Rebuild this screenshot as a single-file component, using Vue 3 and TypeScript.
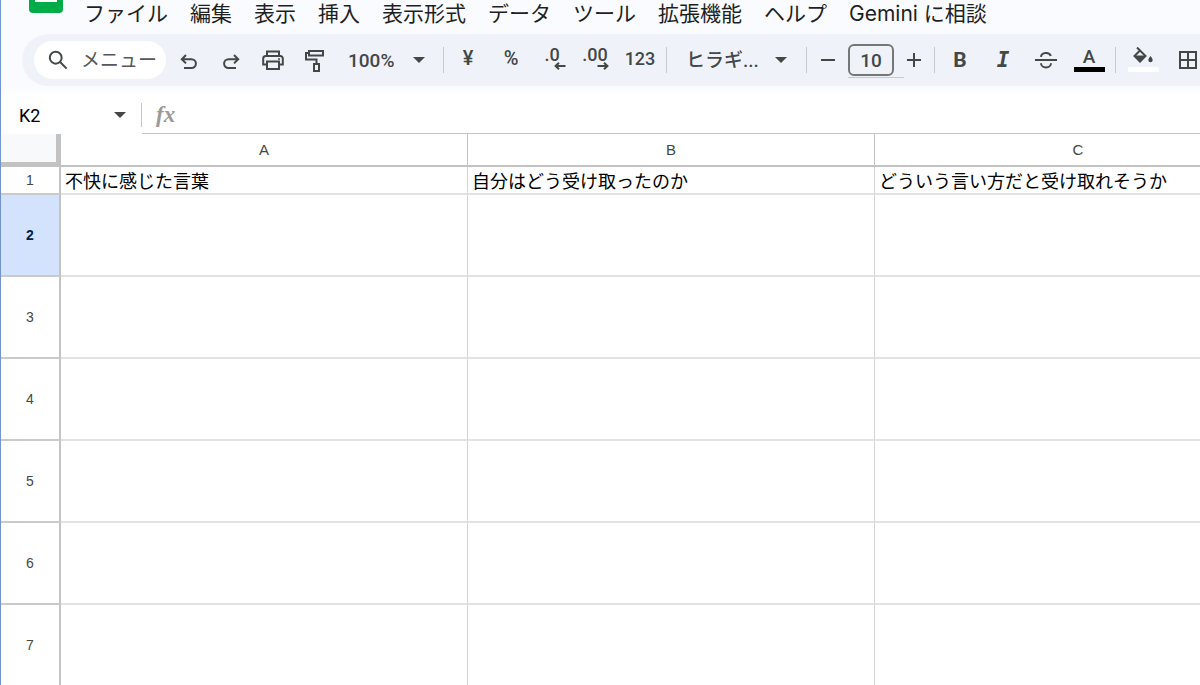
<script setup lang="ts">
import { ref } from 'vue'

const menus = ['ファイル', '編集', '表示', '挿入', '表示形式', 'データ', 'ツール', '拡張機能', 'ヘルプ', 'Gemini に相談']

const columns = ['A', 'B', 'C']

interface Row {
  id: number
  cells: string[]
}

const headings = ['不快に感じた言葉', '自分はどう受け取ったのか', 'どういう言い方だと受け取れそうか']
const rows: Row[] = Array.from({ length: 7 }, (_, i) => ({
  id: i + 1,
  cells: i === 0 ? headings : ['', '', ''],
}))

const activeRow = ref(2)
const cellName = ref('K2')
const fontSize = ref('10')
const formula = ref('')
const query = ref('')
</script>

<template>
  <div class="app">
    <header class="top">
      <div class="menubar">
        <svg class="logo" viewBox="0 0 34 27" aria-hidden="true">
          <path d="M0 0h34v23a4 4 0 0 1-4 4H4a4 4 0 0 1-4-4z" fill="#00ac47" />
          <rect x="6" y="4" width="22" height="12" fill="#fff" />
        </svg>
        <nav class="menus">
          <button v-for="m in menus" :key="m" type="button" class="menu">{{ m }}</button>
        </nav>
      </div>

      <div class="toolbar">
        <label class="search">
          <svg width="20" height="20" viewBox="0 0 22 22" aria-hidden="true">
            <g fill="none" stroke="#444746" stroke-width="2.2">
              <circle cx="8.5" cy="8.5" r="6.5" />
              <path d="M13 13l7.500 7.500" />
            </g>
          </svg>
          <input v-model="query" type="text" placeholder="メニュー" aria-label="メニュー" />
        </label>

        <div class="group">
          <button type="button" class="tool low" aria-label="元に戻す">
            <svg width="20" height="20" viewBox="0 0 20 20"><path d="M7 3L2.800 7.200L7 11.400M3 7.200H12.500a4.400 4.400 0 0 1 0 8.800H5" /></svg>
          </button>
          <button type="button" class="tool low" aria-label="やり直し">
            <svg width="20" height="20" viewBox="0 0 20 20"><path d="M13 3L17.200 7.200L13 11.400M17 7.200H7.500a4.400 4.400 0 0 0 0 8.800H15" /></svg>
          </button>
          <button type="button" class="tool" aria-label="印刷">
            <svg width="24" height="22" viewBox="0 0 24 22">
              <path d="M6 7V2.500H18V7M6 15.500H2.200V9.500a2.500 2.500 0 0 1 2.500-2.500H19.300a2.500 2.500 0 0 1 2.500 2.500V15.500H18M6 12.500H18V20H6z" />
              <circle cx="18" cy="10" r="1" class="solid" />
            </svg>
          </button>
          <button type="button" class="tool" aria-label="書式を貼り付け">
            <svg width="22" height="24" viewBox="0 0 22 24"><path d="M5 3H19V7.500H5zM5 5H2V11.500H12.500V16M10 16H15V23H10z" /></svg>
          </button>
        </div>

        <div class="picker zoom">
          <select aria-label="ズーム"><option>100%</option></select>
          <svg class="caret" viewBox="0 0 12 6" aria-hidden="true"><path d="M0 0h12L6 6z" /></svg>
        </div>
        <span class="sep"></span>

        <div class="group numbers">
          <button type="button" class="tool symbol">¥</button>
          <button type="button" class="tool symbol">%</button>
          <button type="button" class="tool decimal">
            <span>.0</span>
            <svg width="12" height="8" viewBox="0 0 12 8"><path d="M5 .8L1.600 4L5 7.200M2 4H11.500" /></svg>
          </button>
          <button type="button" class="tool decimal">
            <span>.00</span>
            <svg width="12" height="8" viewBox="0 0 12 8"><path d="M7 .8L10.400 4L7 7.200M10 4H.5" /></svg>
          </button>
          <button type="button" class="tool">123</button>
        </div>
        <span class="sep"></span>

        <div class="picker font">
          <select aria-label="フォント"><option>ヒラギ...</option></select>
          <svg class="caret" viewBox="0 0 12 6" aria-hidden="true"><path d="M0 0h12L6 6z" /></svg>
        </div>
        <span class="sep"></span>

        <div class="group size">
          <button type="button" class="tool" aria-label="フォントサイズを縮小">
            <svg width="16" height="16" viewBox="0 0 16 16"><path d="M1 8H15" /></svg>
          </button>
          <div class="size-box"><input v-model="fontSize" type="text" aria-label="フォントサイズ" /></div>
          <button type="button" class="tool" aria-label="フォントサイズを拡大">
            <svg width="16" height="16" viewBox="0 0 16 16"><path d="M1 8H15M8 1V15" /></svg>
          </button>
        </div>
        <span class="sep"></span>

        <div class="group styles">
          <button type="button" class="tool bold">B</button>
          <button type="button" class="tool italic">I</button>
          <button type="button" class="tool" aria-label="取り消し線">
            <svg width="22" height="20" viewBox="0 0 22 20"><path d="M0 10H22M6 6.800a5 4.200 0 0 1 9.800-.8M6 13.200a5 4.200 0 0 0 10 0" /></svg>
          </button>
          <button type="button" class="tool swatch">
            <span>A</span>
            <i class="bar black"></i>
          </button>
        </div>
        <span class="sep"></span>

        <div class="group fills">
          <button type="button" class="tool swatch" aria-label="塗りつぶしの色">
            <svg width="22" height="20" viewBox="0 0 22 20">
              <path d="M5 .5L13.500 9L8 14.500L2.500 9L8 3.500" />
              <path class="solid" d="M2 8.500H14L8 15.500zM18.500 9c1.500 2 2.200 3 2.200 4a2.200 2.200 0 0 1-4.400 0c0-1 .7-2 2.200-4z" />
            </svg>
            <i class="bar white"></i>
          </button>
          <button type="button" class="tool" aria-label="枠線">
            <svg width="20" height="20" viewBox="0 0 20 20"><path d="M2 2H18V18H2zM10 2V18M2 10H18" /></svg>
          </button>
        </div>
      </div>
    </header>

    <div class="formula-bar">
      <div class="name-box">
        <input v-model="cellName" type="text" aria-label="名前ボックス" />
        <svg class="caret" viewBox="0 0 12 6" aria-hidden="true"><path d="M0 0h12L6 6z" /></svg>
      </div>
      <label class="formula">
        <span class="fx">fx</span>
        <input v-model="formula" type="text" aria-label="数式" />
      </label>
    </div>

    <main class="sheet">
      <table>
        <colgroup>
          <col class="row-col" />
          <col v-for="c in columns" :key="c" class="data-col" />
        </colgroup>
        <thead>
          <tr>
            <td class="corner"></td>
            <th v-for="c in columns" :key="c" scope="col">{{ c }}</th>
          </tr>
        </thead>
        <tbody>
          <tr v-for="r in rows" :key="r.id" :class="{ short: r.id === 1, active: r.id === activeRow }">
            <th scope="row">{{ r.id }}</th>
            <td v-for="(cell, i) in r.cells" :key="i">{{ cell }}</td>
          </tr>
        </tbody>
      </table>
    </main>
  </div>
</template>

<style>
body {
  margin: 0;
  background: #fff;
}
</style>

<style scoped>
.app {
  box-sizing: border-box;
  height: 100vh;
  overflow: hidden;
  display: flex;
  flex-direction: column;
  border-left: 1px solid #7394cc;
  font-family: Roboto, "Noto Sans CJK JP", sans-serif;
  color: #1f1f1f;
}

button,
input,
select {
  font: inherit;
  color: inherit;
  border: 0;
  padding: 0;
  margin: 0;
  background: none;
  outline: 0;
}

.top {
  flex: none;
  padding-bottom: 10px;
  background: linear-gradient(#f9fbfe 0, #f9fbfe 86px, #fff 100%);
}

.menubar {
  display: flex;
  height: 27px;
}

.logo {
  flex: none;
  width: 34px;
  height: 27px;
  margin: -14px 21px 0 28px;
}

.menus {
  display: flex;
  gap: 22px;
  font: 21px/27px Inter, "Noto Sans CJK JP", sans-serif;
}

.menu {
  flex: none;
  white-space: nowrap;
}

.toolbar {
  display: flex;
  align-items: center;
  height: 52px;
  margin: 7px 0 0 21px;
  padding-left: 12px;
  border-radius: 26px 0 0 26px;
  background: #eff3f9;
  color: #444746;
  font-size: 19px;
  font-weight: 500;
  overflow: hidden;
}

.toolbar > * {
  flex: none;
}

.search {
  display: flex;
  align-items: center;
  gap: 13px;
  box-sizing: border-box;
  width: 132px;
  height: 38px;
  margin-right: 2px;
  padding-left: 14px;
  border-radius: 19px;
  background: #fff;
}

.search svg {
  flex: none;
}

.search input {
  flex: 1;
  min-width: 0;
  font-weight: 400;
}

.search input::placeholder {
  color: #55585a;
  opacity: 1;
}

.group {
  display: flex;
  align-items: center;
}

.tool {
  display: flex;
  align-items: center;
  justify-content: center;
  width: 42px;
  height: 38px;
}

.tool svg {
  fill: none;
  stroke: #444746;
  stroke-width: 2;
}

.tool svg .solid {
  fill: #444746;
  stroke: none;
}

.low {
  padding-top: 4px;
}

.sep {
  width: 1px;
  height: 26px;
  background: #c7cacf;
}

.picker {
  display: flex;
  align-items: center;
  position: relative;
}

.picker select {
  appearance: none;
  width: 100%;
  height: 38px;
  padding-left: 12px;
}

.caret {
  flex: none;
  width: 12px;
  height: 6px;
  fill: #444746;
}

.picker .caret {
  position: absolute;
  right: 18px;
  pointer-events: none;
}

.zoom {
  width: 107px;
}

.font {
  width: 139px;
}

.font .caret {
  right: 19px;
}

.font select {
  padding-left: 19px;
}

.numbers {
  gap: 1px;
  padding: 0 5px 4px 3px;
  height: 38px;
  box-sizing: border-box;
  font-size: 18px;
}

.symbol {
  font-size: 20px;
}

.decimal {
  flex-direction: column;
  line-height: 16px;
}

.decimal svg {
  margin: -1px 0 0 12px;
}

.decimal span {
  padding-right: 4px;
}

.size {
  padding-left: 1px;
}

.size .tool {
  width: 40px;
}

.size-box {
  position: relative;
}

.size-box input {
  display: block;
  box-sizing: border-box;
  width: 46px;
  height: 32px;
  border: 2px solid #747775;
  border-radius: 6px;
  text-align: center;
}

.size-box::after {
  content: "";
  position: absolute;
  top: 33px;
  left: 0;
  width: 56px;
  height: 1px;
  background: #c7cacf;
}

.styles {
  gap: 1px;
  padding: 0 5px 0 4px;
}

.bold {
  font-size: 21px;
  font-weight: 700;
}

.italic {
  font: italic 700 21px "DejaVu Sans Mono", monospace;
}

.swatch {
  flex-direction: column;
  padding-bottom: 2px;
}

.swatch span {
  line-height: 20px;
}

.bar {
  width: 31px;
  height: 5px;
}

.black {
  background: #000;
}

.white {
  background: #fff;
}

.fills {
  gap: 3px;
  padding-left: 6px;
}

.formula-bar {
  flex: none;
  display: flex;
  align-items: center;
  height: 38px;
}

.name-box {
  display: flex;
  align-items: center;
  box-sizing: border-box;
  width: 141px;
  height: 24px;
  padding: 0 15px 0 18px;
  border-right: 1px solid #c7c7c7;
  font-size: 18px;
  color: #000;
}

.name-box input {
  flex: 1;
  min-width: 0;
}

.formula {
  flex: 1;
  display: flex;
  align-items: center;
  gap: 12px;
  box-sizing: border-box;
  height: 38px;
  padding-left: 14px;
  border-bottom: 1px solid #c4c4c4;
}

.fx {
  font: italic 700 23px "Liberation Serif", serif;
  color: #9a9a9a;
}

.formula input {
  flex: 1;
}

.sheet {
  flex: 1;
  min-height: 0;
  overflow: hidden;
}

table {
  width: max-content;
  table-layout: fixed;
  border-collapse: separate;
  border-spacing: 0;
}

.row-col {
  width: 60px;
}

.data-col {
  width: 407px;
}

th,
td {
  box-sizing: border-box;
  height: 82px;
  padding: 0;
  border-right: 1px solid #d4d4d4;
  border-bottom: 2px solid #e2e2e2;
}

th {
  font: 14px "Liberation Sans", sans-serif;
  color: #444746;
}

thead th {
  height: 33px;
  border-color: #c2c2c2;
  font-size: 15px;
}

thead .corner {
  height: 33px;
  border-right: 5px solid #c2c2c2;
  border-bottom: 5px solid #c2c2c2;
  background: #f8f9fa;
}

tbody th {
  border-right: 2px solid #c4c4c4;
  border-bottom-color: #cacaca;
}

.short th,
.short td {
  height: 28px;
}

tbody td {
  padding-left: 4px;
  font: 18px/26px "Noto Sans CJK JP", sans-serif;
  color: #000;
  white-space: nowrap;
}

.active th {
  background: #d3e3fd;
  color: #041e49;
  font-weight: 700;
}
</style>
